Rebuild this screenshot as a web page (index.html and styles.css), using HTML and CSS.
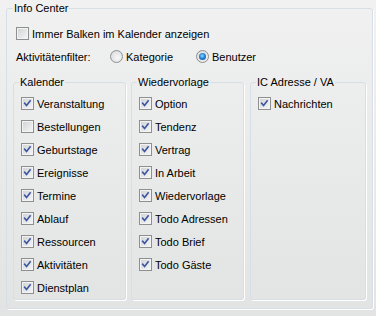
FILE: index.html
```html
<!DOCTYPE html>
<html lang="de">
<head>
    <meta charset="UTF-8">
    <meta name="viewport" content="width=device-width, initial-scale=1.0">
    <title>Info Center</title>
    <link rel="stylesheet" href="styles.css">
</head>
<body>

<fieldset class="group outer">
    <legend>Info Center</legend>

    <label class="item wide"><span class="box"></span>Immer Balken im Kalender anzeigen</label>

    <div class="filter">
        <span class="filter-label">Aktivitätenfilter:</span>
        <label class="option"><span class="radio"></span>Kategorie</label>
        <label class="option"><span class="radio on"></span>Benutzer</label>
    </div>

    <div class="columns">
        <fieldset class="group inner">
            <legend>Kalender</legend>
            <label class="item"><span class="box on"><svg viewBox="0 0 13 13"><path d="M3.2 6.2 L5.4 8.8 L9.6 3.4"/></svg></span>Veranstaltung</label>
            <label class="item"><span class="box"></span>Bestellungen</label>
            <label class="item"><span class="box on"><svg viewBox="0 0 13 13"><path d="M3.2 6.2 L5.4 8.8 L9.6 3.4"/></svg></span>Geburtstage</label>
            <label class="item"><span class="box on"><svg viewBox="0 0 13 13"><path d="M3.2 6.2 L5.4 8.8 L9.6 3.4"/></svg></span>Ereignisse</label>
            <label class="item"><span class="box on"><svg viewBox="0 0 13 13"><path d="M3.2 6.2 L5.4 8.8 L9.6 3.4"/></svg></span>Termine</label>
            <label class="item"><span class="box on"><svg viewBox="0 0 13 13"><path d="M3.2 6.2 L5.4 8.8 L9.6 3.4"/></svg></span>Ablauf</label>
            <label class="item"><span class="box on"><svg viewBox="0 0 13 13"><path d="M3.2 6.2 L5.4 8.8 L9.6 3.4"/></svg></span>Ressourcen</label>
            <label class="item"><span class="box on"><svg viewBox="0 0 13 13"><path d="M3.2 6.2 L5.4 8.8 L9.6 3.4"/></svg></span>Aktivitäten</label>
            <label class="item"><span class="box on"><svg viewBox="0 0 13 13"><path d="M3.2 6.2 L5.4 8.8 L9.6 3.4"/></svg></span>Dienstplan</label>
        </fieldset>

        <fieldset class="group inner">
            <legend>Wiedervorlage</legend>
            <label class="item"><span class="box on"><svg viewBox="0 0 13 13"><path d="M3.2 6.2 L5.4 8.8 L9.6 3.4"/></svg></span>Option</label>
            <label class="item"><span class="box on"><svg viewBox="0 0 13 13"><path d="M3.2 6.2 L5.4 8.8 L9.6 3.4"/></svg></span>Tendenz</label>
            <label class="item"><span class="box on"><svg viewBox="0 0 13 13"><path d="M3.2 6.2 L5.4 8.8 L9.6 3.4"/></svg></span>Vertrag</label>
            <label class="item"><span class="box on"><svg viewBox="0 0 13 13"><path d="M3.2 6.2 L5.4 8.8 L9.6 3.4"/></svg></span>In Arbeit</label>
            <label class="item"><span class="box on"><svg viewBox="0 0 13 13"><path d="M3.2 6.2 L5.4 8.8 L9.6 3.4"/></svg></span>Wiedervorlage</label>
            <label class="item"><span class="box on"><svg viewBox="0 0 13 13"><path d="M3.2 6.2 L5.4 8.8 L9.6 3.4"/></svg></span>Todo Adressen</label>
            <label class="item"><span class="box on"><svg viewBox="0 0 13 13"><path d="M3.2 6.2 L5.4 8.8 L9.6 3.4"/></svg></span>Todo Brief</label>
            <label class="item"><span class="box on"><svg viewBox="0 0 13 13"><path d="M3.2 6.2 L5.4 8.8 L9.6 3.4"/></svg></span>Todo Gäste</label>
        </fieldset>

        <fieldset class="group inner last">
            <legend>IC Adresse / VA</legend>
            <label class="item"><span class="box on"><svg viewBox="0 0 13 13"><path d="M3.2 6.2 L5.4 8.8 L9.6 3.4"/></svg></span>Nachrichten</label>
        </fieldset>
    </div>
</fieldset>

</body>
</html>
```

FILE: styles.css
```css
html {
    height: 100%;
}
body {
    margin: 0;
    min-height: 100%;
    padding-left: 6px;
    font-family: 'Liberation Sans', Arial, sans-serif;
    font-size: 11px;
    color: #000;
    background: linear-gradient(#f0f1f0, #e2e4e4);
}
.group {
    margin: 0;
    border: 1px solid #d5dfe5;
    border-radius: 3px;
    box-shadow: 1px 1px 0 #fff;
    min-width: 0;
}
.group legend {
    padding: 0 1px;
    line-height: 14px;
}
.outer {
    margin-top: 1px;
    width: 367px;
    box-sizing: border-box;
    padding: 7px 6px 8px 6px;
}
.inner {
    padding: 3px 0 0 7px;
}
.inner legend {
    margin-left: -2px;
}
.item {
    display: flex;
    align-items: center;
    height: 23px;
    white-space: nowrap;
}
.wide {
    padding-left: 3px;
}
.box {
    width: 13px;
    height: 13px;
    box-sizing: border-box;
    margin-right: 3px;
    border: 1px solid #8e8f8f;
    background: linear-gradient(135deg, #cfd1d4, #f7f7f7);
    box-shadow: inset 0 0 0 1px #f3f3f3;
    flex: none;
}
.box svg {
    display: block;
    width: 11px;
    height: 11px;
    margin: 0;
}
.box path {
    fill: none;
    stroke: #3b55a2;
    stroke-width: 1.9;
    stroke-linecap: square;
}
.filter {
    display: flex;
    align-items: center;
    height: 23px;
    padding-left: 3px;
}
.filter-label {
    width: 94px;
}
.option {
    display: flex;
    align-items: center;
    width: 86px;
}
.radio {
    width: 13px;
    height: 13px;
    box-sizing: border-box;
    margin-right: 3px;
    border: 1px solid #8e8f8f;
    border-radius: 50%;
    background: radial-gradient(circle at 60% 60%, #f8f8f8, #d4d6d8);
    display: flex;
    align-items: center;
    justify-content: center;
}
.radio.on::after {
    content: "";
    width: 7px;
    height: 7px;
    border-radius: 50%;
    background: radial-gradient(circle at 45% 40%, #8fe0ff, #2a83d6 45%, #0e3f86);
}
.columns {
    display: grid;
    grid-template-columns: 113px 113px 117px;
    column-gap: 5px;
    margin-top: 7px;
}
.last {
    margin-left: 1px;
}
```
